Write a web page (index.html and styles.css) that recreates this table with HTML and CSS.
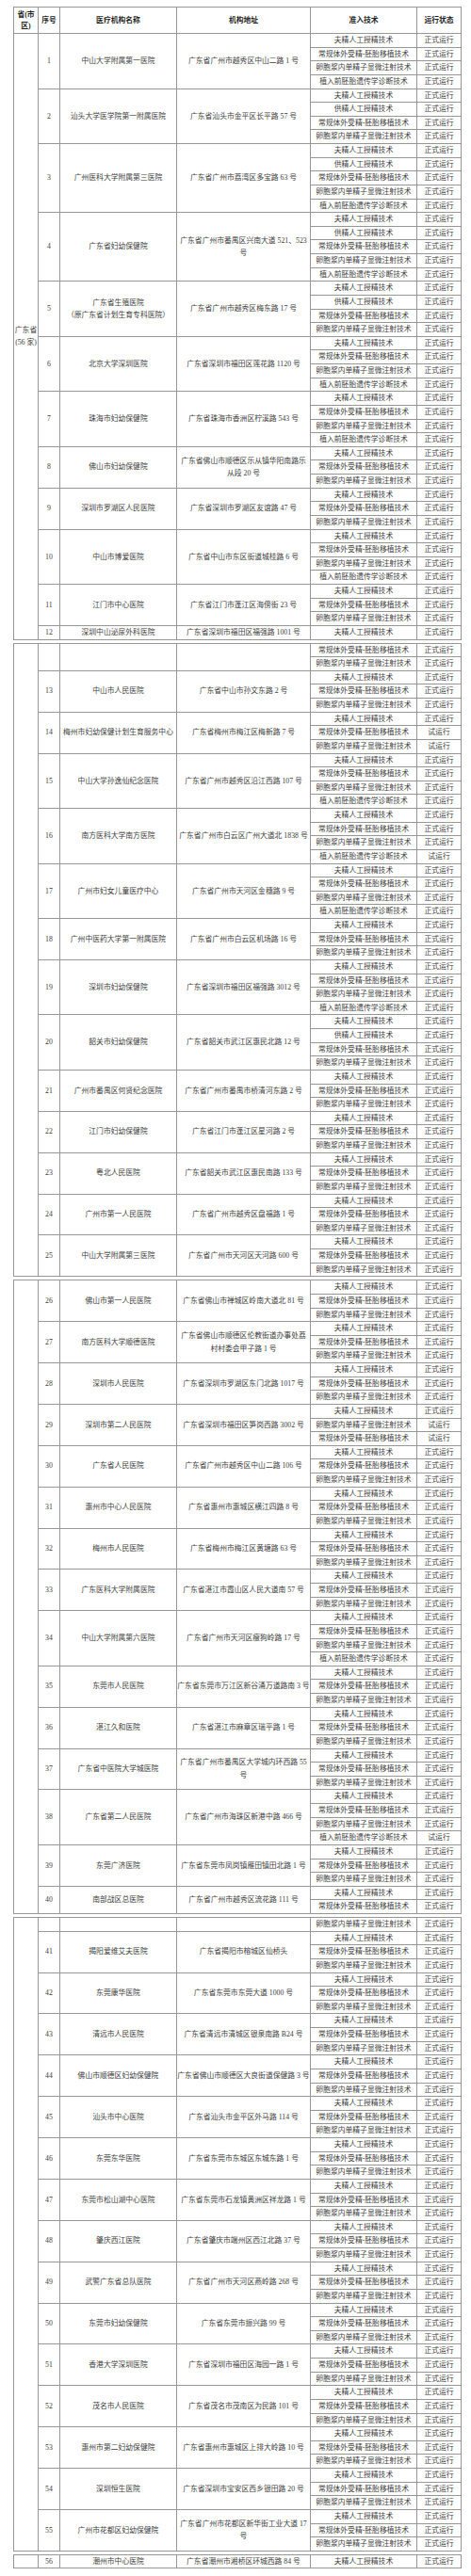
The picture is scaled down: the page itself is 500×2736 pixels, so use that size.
FILE: index.html
```html
<!DOCTYPE html>
<html lang="zh-CN">
<head>
<meta charset="utf-8">
<title>广东省人类辅助生殖技术机构</title>
<link rel="stylesheet" href="styles.css">
</head>
<body>
<main class="page">

<table class="seg">
<colgroup><col class="c1"><col class="c2"><col class="c3"><col class="c4"><col class="c5"><col class="c6"></colgroup>
<thead>
<tr class="head"><th>省(市<br>区)</th><th>序号</th><th>医疗机构名称</th><th>机构地址</th><th>准入技术</th><th>运行状态</th></tr>
</thead>
<tbody>
<tr><td rowspan="44" class="prov">广东省<br>(56 家)</td><td rowspan="4">1</td><td rowspan="4">中山大学附属第一医院</td><td rowspan="4">广东省广州市越秀区中山二路 1 号</td><td>夫精人工授精技术</td><td>正式运行</td></tr>
<tr><td>常规体外受精-胚胎移植技术</td><td>正式运行</td></tr>
<tr><td>卵胞浆内单精子显微注射技术</td><td>正式运行</td></tr>
<tr><td>植入前胚胎遗传学诊断技术</td><td>正式运行</td></tr>

<tr><td rowspan="4">2</td><td rowspan="4">汕头大学医学院第一附属医院</td><td rowspan="4">广东省汕头市金平区长平路 57 号</td><td>夫精人工授精技术</td><td>正式运行</td></tr>
<tr><td>供精人工授精技术</td><td>正式运行</td></tr>
<tr><td>常规体外受精-胚胎移植技术</td><td>正式运行</td></tr>
<tr><td>卵胞浆内单精子显微注射技术</td><td>正式运行</td></tr>

<tr><td rowspan="5">3</td><td rowspan="5">广州医科大学附属第三医院</td><td rowspan="5">广东省广州市荔湾区多宝路 63 号</td><td>夫精人工授精技术</td><td>正式运行</td></tr>
<tr><td>供精人工授精技术</td><td>正式运行</td></tr>
<tr><td>常规体外受精-胚胎移植技术</td><td>正式运行</td></tr>
<tr><td>卵胞浆内单精子显微注射技术</td><td>正式运行</td></tr>
<tr><td>植入前胚胎遗传学诊断技术</td><td>正式运行</td></tr>

<tr><td rowspan="5">4</td><td rowspan="5">广东省妇幼保健院</td><td rowspan="5">广东省广州市番禺区兴南大道 521、523<br>号</td><td>夫精人工授精技术</td><td>正式运行</td></tr>
<tr><td>供精人工授精技术</td><td>正式运行</td></tr>
<tr><td>常规体外受精-胚胎移植技术</td><td>正式运行</td></tr>
<tr><td>卵胞浆内单精子显微注射技术</td><td>正式运行</td></tr>
<tr><td>植入前胚胎遗传学诊断技术</td><td>正式运行</td></tr>

<tr><td rowspan="4">5</td><td rowspan="4">广东省生殖医院<br>（原广东省计划生育专科医院）</td><td rowspan="4">广东省广州市越秀区梅东路 17 号</td><td>夫精人工授精技术</td><td>正式运行</td></tr>
<tr><td>供精人工授精技术</td><td>正式运行</td></tr>
<tr><td>常规体外受精-胚胎移植技术</td><td>正式运行</td></tr>
<tr><td>卵胞浆内单精子显微注射技术</td><td>正式运行</td></tr>

<tr><td rowspan="4">6</td><td rowspan="4">北京大学深圳医院</td><td rowspan="4">广东省深圳市福田区莲花路 1120 号</td><td>夫精人工授精技术</td><td>正式运行</td></tr>
<tr><td>常规体外受精-胚胎移植技术</td><td>正式运行</td></tr>
<tr><td>卵胞浆内单精子显微注射技术</td><td>正式运行</td></tr>
<tr><td>植入前胚胎遗传学诊断技术</td><td>正式运行</td></tr>

<tr><td rowspan="4">7</td><td rowspan="4">珠海市妇幼保健院</td><td rowspan="4">广东省珠海市香洲区柠溪路 543 号</td><td>夫精人工授精技术</td><td>正式运行</td></tr>
<tr><td>常规体外受精-胚胎移植技术</td><td>正式运行</td></tr>
<tr><td>卵胞浆内单精子显微注射技术</td><td>正式运行</td></tr>
<tr><td>植入前胚胎遗传学诊断技术</td><td>正式运行</td></tr>

<tr><td rowspan="3">8</td><td rowspan="3">佛山市妇幼保健院</td><td rowspan="3">广东省佛山市顺德区乐从镇华阳南路乐<br>从段 20 号</td><td>夫精人工授精技术</td><td>正式运行</td></tr>
<tr><td>常规体外受精-胚胎移植技术</td><td>正式运行</td></tr>
<tr><td>卵胞浆内单精子显微注射技术</td><td>正式运行</td></tr>

<tr><td rowspan="3">9</td><td rowspan="3">深圳市罗湖区人民医院</td><td rowspan="3">广东省深圳市罗湖区友谊路 47 号</td><td>夫精人工授精技术</td><td>正式运行</td></tr>
<tr><td>常规体外受精-胚胎移植技术</td><td>正式运行</td></tr>
<tr><td>卵胞浆内单精子显微注射技术</td><td>正式运行</td></tr>

<tr><td rowspan="4">10</td><td rowspan="4">中山市博爱医院</td><td rowspan="4">广东省中山市东区街道城桂路 6 号</td><td>夫精人工授精技术</td><td>正式运行</td></tr>
<tr><td>常规体外受精-胚胎移植技术</td><td>正式运行</td></tr>
<tr><td>卵胞浆内单精子显微注射技术</td><td>正式运行</td></tr>
<tr><td>植入前胚胎遗传学诊断技术</td><td>正式运行</td></tr>

<tr><td rowspan="3">11</td><td rowspan="3">江门市中心医院</td><td rowspan="3">广东省江门市蓬江区海傍街 23 号</td><td>夫精人工授精技术</td><td>正式运行</td></tr>
<tr><td>常规体外受精-胚胎移植技术</td><td>正式运行</td></tr>
<tr><td>卵胞浆内单精子显微注射技术</td><td>正式运行</td></tr>

<tr><td>12</td><td>深圳中山泌尿外科医院</td><td>广东省深圳市福田区福强路 1001 号</td><td>夫精人工授精技术</td><td>正式运行</td></tr>
</tbody>
</table>

<table class="seg">
<colgroup><col class="c1"><col class="c2"><col class="c3"><col class="c4"><col class="c5"><col class="c6"></colgroup>
<tbody>
<tr><td rowspan="46"></td><td rowspan="2"></td><td rowspan="2"></td><td rowspan="2"></td><td>常规体外受精-胚胎移植技术</td><td>正式运行</td></tr>
<tr><td>卵胞浆内单精子显微注射技术</td><td>正式运行</td></tr>

<tr><td rowspan="3">13</td><td rowspan="3">中山市人民医院</td><td rowspan="3">广东省中山市孙文东路 2 号</td><td>夫精人工授精技术</td><td>正式运行</td></tr>
<tr><td>常规体外受精-胚胎移植技术</td><td>正式运行</td></tr>
<tr><td>卵胞浆内单精子显微注射技术</td><td>正式运行</td></tr>

<tr><td rowspan="3">14</td><td rowspan="3">梅州市妇幼保健计划生育服务中心</td><td rowspan="3">广东省梅州市梅江区梅新路 7 号</td><td>夫精人工授精技术</td><td>正式运行</td></tr>
<tr><td>常规体外受精-胚胎移植技术</td><td>试运行</td></tr>
<tr><td>卵胞浆内单精子显微注射技术</td><td>试运行</td></tr>

<tr><td rowspan="4">15</td><td rowspan="4">中山大学孙逸仙纪念医院</td><td rowspan="4">广东省广州市越秀区沿江西路 107 号</td><td>夫精人工授精技术</td><td>正式运行</td></tr>
<tr><td>常规体外受精-胚胎移植技术</td><td>正式运行</td></tr>
<tr><td>卵胞浆内单精子显微注射技术</td><td>正式运行</td></tr>
<tr><td>植入前胚胎遗传学诊断技术</td><td>正式运行</td></tr>

<tr><td rowspan="4">16</td><td rowspan="4">南方医科大学南方医院</td><td rowspan="4">广东省广州市白云区广州大道北 1838 号</td><td>夫精人工授精技术</td><td>正式运行</td></tr>
<tr><td>常规体外受精-胚胎移植技术</td><td>正式运行</td></tr>
<tr><td>卵胞浆内单精子显微注射技术</td><td>正式运行</td></tr>
<tr><td>植入前胚胎遗传学诊断技术</td><td>试运行</td></tr>

<tr><td rowspan="4">17</td><td rowspan="4">广州市妇女儿童医疗中心</td><td rowspan="4">广东省广州市天河区金穗路 9 号</td><td>夫精人工授精技术</td><td>正式运行</td></tr>
<tr><td>常规体外受精-胚胎移植技术</td><td>正式运行</td></tr>
<tr><td>卵胞浆内单精子显微注射技术</td><td>正式运行</td></tr>
<tr><td>植入前胚胎遗传学诊断技术</td><td>正式运行</td></tr>

<tr><td rowspan="3">18</td><td rowspan="3">广州中医药大学第一附属医院</td><td rowspan="3">广东省广州市白云区机场路 16 号</td><td>夫精人工授精技术</td><td>正式运行</td></tr>
<tr><td>常规体外受精-胚胎移植技术</td><td>正式运行</td></tr>
<tr><td>卵胞浆内单精子显微注射技术</td><td>正式运行</td></tr>

<tr><td rowspan="4">19</td><td rowspan="4">深圳市妇幼保健院</td><td rowspan="4">广东省深圳市福田区福强路 3012 号</td><td>夫精人工授精技术</td><td>正式运行</td></tr>
<tr><td>常规体外受精-胚胎移植技术</td><td>正式运行</td></tr>
<tr><td>卵胞浆内单精子显微注射技术</td><td>正式运行</td></tr>
<tr><td>植入前胚胎遗传学诊断技术</td><td>正式运行</td></tr>

<tr><td rowspan="4">20</td><td rowspan="4">韶关市妇幼保健院</td><td rowspan="4">广东省韶关市武江区惠民北路 12 号</td><td>夫精人工授精技术</td><td>正式运行</td></tr>
<tr><td>供精人工授精技术</td><td>正式运行</td></tr>
<tr><td>常规体外受精-胚胎移植技术</td><td>正式运行</td></tr>
<tr><td>卵胞浆内单精子显微注射技术</td><td>正式运行</td></tr>

<tr><td rowspan="3">21</td><td rowspan="3">广州市番禺区何贤纪念医院</td><td rowspan="3">广东省广州市番禺市桥清河东路 2 号</td><td>夫精人工授精技术</td><td>正式运行</td></tr>
<tr><td>常规体外受精-胚胎移植技术</td><td>正式运行</td></tr>
<tr><td>卵胞浆内单精子显微注射技术</td><td>正式运行</td></tr>

<tr><td rowspan="3">22</td><td rowspan="3">江门市妇幼保健院</td><td rowspan="3">广东省江门市蓬江区星河路 2 号</td><td>夫精人工授精技术</td><td>正式运行</td></tr>
<tr><td>常规体外受精-胚胎移植技术</td><td>正式运行</td></tr>
<tr><td>卵胞浆内单精子显微注射技术</td><td>正式运行</td></tr>

<tr><td rowspan="3">23</td><td rowspan="3">粤北人民医院</td><td rowspan="3">广东省韶关市武江区惠民南路 133 号</td><td>夫精人工授精技术</td><td>正式运行</td></tr>
<tr><td>常规体外受精-胚胎移植技术</td><td>正式运行</td></tr>
<tr><td>卵胞浆内单精子显微注射技术</td><td>正式运行</td></tr>

<tr><td rowspan="3">24</td><td rowspan="3">广州市第一人民医院</td><td rowspan="3">广东省广州市越秀区盘福路 1 号</td><td>夫精人工授精技术</td><td>正式运行</td></tr>
<tr><td>常规体外受精-胚胎移植技术</td><td>正式运行</td></tr>
<tr><td>卵胞浆内单精子显微注射技术</td><td>正式运行</td></tr>

<tr><td rowspan="3">25</td><td rowspan="3">中山大学附属第三医院</td><td rowspan="3">广东省广州市天河区天河路 600 号</td><td>夫精人工授精技术</td><td>正式运行</td></tr>
<tr><td>常规体外受精-胚胎移植技术</td><td>正式运行</td></tr>
<tr><td>卵胞浆内单精子显微注射技术</td><td>正式运行</td></tr>
</tbody>
</table>

<table class="seg">
<colgroup><col class="c1"><col class="c2"><col class="c3"><col class="c4"><col class="c5"><col class="c6"></colgroup>
<tbody>
<tr><td rowspan="46"></td><td rowspan="3">26</td><td rowspan="3">佛山市第一人民医院</td><td rowspan="3">广东省佛山市禅城区岭南大道北 81 号</td><td>夫精人工授精技术</td><td>正式运行</td></tr>
<tr><td>常规体外受精-胚胎移植技术</td><td>正式运行</td></tr>
<tr><td>卵胞浆内单精子显微注射技术</td><td>正式运行</td></tr>

<tr><td rowspan="3">27</td><td rowspan="3">南方医科大学顺德医院</td><td rowspan="3">广东省佛山市顺德区伦教街道办事处荔<br>村村委会甲子路 1 号</td><td>夫精人工授精技术</td><td>正式运行</td></tr>
<tr><td>常规体外受精-胚胎移植技术</td><td>正式运行</td></tr>
<tr><td>卵胞浆内单精子显微注射技术</td><td>正式运行</td></tr>

<tr><td rowspan="3">28</td><td rowspan="3">深圳市人民医院</td><td rowspan="3">广东省深圳市罗湖区东门北路 1017 号</td><td>夫精人工授精技术</td><td>正式运行</td></tr>
<tr><td>常规体外受精-胚胎移植技术</td><td>正式运行</td></tr>
<tr><td>卵胞浆内单精子显微注射技术</td><td>正式运行</td></tr>

<tr><td rowspan="3">29</td><td rowspan="3">深圳市第二人民医院</td><td rowspan="3">广东省深圳市福田区笋岗西路 3002 号</td><td>夫精人工授精技术</td><td>正式运行</td></tr>
<tr><td>卵胞浆内单精子显微注射技术</td><td>试运行</td></tr>
<tr><td>常规体外受精-胚胎移植技术</td><td>试运行</td></tr>

<tr><td rowspan="3">30</td><td rowspan="3">广东省人民医院</td><td rowspan="3">广东省广州市越秀区中山二路 106 号</td><td>夫精人工授精技术</td><td>正式运行</td></tr>
<tr><td>常规体外受精-胚胎移植技术</td><td>正式运行</td></tr>
<tr><td>卵胞浆内单精子显微注射技术</td><td>正式运行</td></tr>

<tr><td rowspan="3">31</td><td rowspan="3">惠州市中心人民医院</td><td rowspan="3">广东省惠州市惠城区横江四路 8 号</td><td>夫精人工授精技术</td><td>正式运行</td></tr>
<tr><td>常规体外受精-胚胎移植技术</td><td>正式运行</td></tr>
<tr><td>卵胞浆内单精子显微注射技术</td><td>正式运行</td></tr>

<tr><td rowspan="3">32</td><td rowspan="3">梅州市人民医院</td><td rowspan="3">广东省梅州市梅江区黄塘路 63 号</td><td>夫精人工授精技术</td><td>正式运行</td></tr>
<tr><td>常规体外受精-胚胎移植技术</td><td>正式运行</td></tr>
<tr><td>卵胞浆内单精子显微注射技术</td><td>正式运行</td></tr>

<tr><td rowspan="3">33</td><td rowspan="3">广东医科大学附属医院</td><td rowspan="3">广东省湛江市霞山区人民大道南 57 号</td><td>夫精人工授精技术</td><td>正式运行</td></tr>
<tr><td>常规体外受精-胚胎移植技术</td><td>正式运行</td></tr>
<tr><td>卵胞浆内单精子显微注射技术</td><td>正式运行</td></tr>

<tr><td rowspan="4">34</td><td rowspan="4">中山大学附属第六医院</td><td rowspan="4">广东省广州市天河区瘦狗岭路 17 号</td><td>夫精人工授精技术</td><td>正式运行</td></tr>
<tr><td>常规体外受精-胚胎移植技术</td><td>正式运行</td></tr>
<tr><td>卵胞浆内单精子显微注射技术</td><td>正式运行</td></tr>
<tr><td>植入前胚胎遗传学诊断技术</td><td>正式运行</td></tr>

<tr><td rowspan="3">35</td><td rowspan="3">东莞市人民医院</td><td rowspan="3">广东省东莞市万江区新谷涌万道路南 3 号</td><td>夫精人工授精技术</td><td>正式运行</td></tr>
<tr><td>常规体外受精-胚胎移植技术</td><td>正式运行</td></tr>
<tr><td>卵胞浆内单精子显微注射技术</td><td>正式运行</td></tr>

<tr><td rowspan="3">36</td><td rowspan="3">湛江久和医院</td><td rowspan="3">广东省湛江市麻章区瑞平路 1 号</td><td>夫精人工授精技术</td><td>正式运行</td></tr>
<tr><td>常规体外受精-胚胎移植技术</td><td>正式运行</td></tr>
<tr><td>卵胞浆内单精子显微注射技术</td><td>正式运行</td></tr>

<tr><td rowspan="3">37</td><td rowspan="3">广东省中医院大学城医院</td><td rowspan="3">广东省广州市番禺区大学城内环西路 55<br>号</td><td>夫精人工授精技术</td><td>正式运行</td></tr>
<tr><td>常规体外受精-胚胎移植技术</td><td>正式运行</td></tr>
<tr><td>卵胞浆内单精子显微注射技术</td><td>正式运行</td></tr>

<tr><td rowspan="4">38</td><td rowspan="4">广东省第二人民医院</td><td rowspan="4">广东省广州市海珠区新港中路 466 号</td><td>夫精人工授精技术</td><td>正式运行</td></tr>
<tr><td>常规体外受精-胚胎移植技术</td><td>正式运行</td></tr>
<tr><td>卵胞浆内单精子显微注射技术</td><td>正式运行</td></tr>
<tr><td>植入前胚胎遗传学诊断技术</td><td>试运行</td></tr>

<tr><td rowspan="3">39</td><td rowspan="3">东莞广济医院</td><td rowspan="3">广东省东莞市凤岗镇雁田镇田北路 1 号</td><td>夫精人工授精技术</td><td>正式运行</td></tr>
<tr><td>常规体外受精-胚胎移植技术</td><td>正式运行</td></tr>
<tr><td>卵胞浆内单精子显微注射技术</td><td>正式运行</td></tr>

<tr><td rowspan="2">40</td><td rowspan="2">南部战区总医院</td><td rowspan="2">广东省广州市越秀区流花路 111 号</td><td>夫精人工授精技术</td><td>正式运行</td></tr>
<tr><td>常规体外受精-胚胎移植技术</td><td>正式运行</td></tr>
</tbody>
</table>

<table class="seg">
<colgroup><col class="c1"><col class="c2"><col class="c3"><col class="c4"><col class="c5"><col class="c6"></colgroup>
<tbody>
<tr><td rowspan="46"></td><td></td><td></td><td></td><td>卵胞浆内单精子显微注射技术</td><td>正式运行</td></tr>

<tr><td rowspan="3">41</td><td rowspan="3">揭阳爱维艾夫医院</td><td rowspan="3">广东省揭阳市榕城区仙桥头</td><td>夫精人工授精技术</td><td>正式运行</td></tr>
<tr><td>常规体外受精-胚胎移植技术</td><td>正式运行</td></tr>
<tr><td>卵胞浆内单精子显微注射技术</td><td>正式运行</td></tr>

<tr><td rowspan="3">42</td><td rowspan="3">东莞康华医院</td><td rowspan="3">广东省东莞市东莞大道 1000 号</td><td>夫精人工授精技术</td><td>正式运行</td></tr>
<tr><td>常规体外受精-胚胎移植技术</td><td>正式运行</td></tr>
<tr><td>卵胞浆内单精子显微注射技术</td><td>正式运行</td></tr>

<tr><td rowspan="3">43</td><td rowspan="3">清远市人民医院</td><td rowspan="3">广东省清远市清城区银泉南路 B24 号</td><td>夫精人工授精技术</td><td>正式运行</td></tr>
<tr><td>常规体外受精-胚胎移植技术</td><td>正式运行</td></tr>
<tr><td>卵胞浆内单精子显微注射技术</td><td>正式运行</td></tr>

<tr><td rowspan="3">44</td><td rowspan="3">佛山市顺德区妇幼保健院</td><td rowspan="3">广东省佛山市顺德区大良街道保健路 3 号</td><td>夫精人工授精技术</td><td>正式运行</td></tr>
<tr><td>常规体外受精-胚胎移植技术</td><td>正式运行</td></tr>
<tr><td>卵胞浆内单精子显微注射技术</td><td>正式运行</td></tr>

<tr><td rowspan="3">45</td><td rowspan="3">汕头市中心医院</td><td rowspan="3">广东省汕头市金平区外马路 114 号</td><td>夫精人工授精技术</td><td>正式运行</td></tr>
<tr><td>常规体外受精-胚胎移植技术</td><td>正式运行</td></tr>
<tr><td>卵胞浆内单精子显微注射技术</td><td>正式运行</td></tr>

<tr><td rowspan="3">46</td><td rowspan="3">东莞东华医院</td><td rowspan="3">广东省东莞市东城区东城东路 1 号</td><td>夫精人工授精技术</td><td>正式运行</td></tr>
<tr><td>常规体外受精-胚胎移植技术</td><td>正式运行</td></tr>
<tr><td>卵胞浆内单精子显微注射技术</td><td>正式运行</td></tr>

<tr><td rowspan="3">47</td><td rowspan="3">东莞市松山湖中心医院</td><td rowspan="3">广东省东莞市石龙镇黄洲区祥龙路 1 号</td><td>夫精人工授精技术</td><td>正式运行</td></tr>
<tr><td>常规体外受精-胚胎移植技术</td><td>正式运行</td></tr>
<tr><td>卵胞浆内单精子显微注射技术</td><td>正式运行</td></tr>

<tr><td rowspan="3">48</td><td rowspan="3">肇庆西江医院</td><td rowspan="3">广东省肇庆市端州区西江北路 37 号</td><td>夫精人工授精技术</td><td>正式运行</td></tr>
<tr><td>常规体外受精-胚胎移植技术</td><td>正式运行</td></tr>
<tr><td>卵胞浆内单精子显微注射技术</td><td>正式运行</td></tr>

<tr><td rowspan="3">49</td><td rowspan="3">武警广东省总队医院</td><td rowspan="3">广东省广州市天河区燕岭路 268 号</td><td>夫精人工授精技术</td><td>正式运行</td></tr>
<tr><td>常规体外受精-胚胎移植技术</td><td>正式运行</td></tr>
<tr><td>卵胞浆内单精子显微注射技术</td><td>正式运行</td></tr>

<tr><td rowspan="3">50</td><td rowspan="3">东莞市妇幼保健院</td><td rowspan="3">广东省东莞市振兴路 99 号</td><td>夫精人工授精技术</td><td>正式运行</td></tr>
<tr><td>常规体外受精-胚胎移植技术</td><td>正式运行</td></tr>
<tr><td>卵胞浆内单精子显微注射技术</td><td>正式运行</td></tr>

<tr><td rowspan="3">51</td><td rowspan="3">香港大学深圳医院</td><td rowspan="3">广东省深圳市福田区海园一路 1 号</td><td>夫精人工授精技术</td><td>正式运行</td></tr>
<tr><td>常规体外受精-胚胎移植技术</td><td>正式运行</td></tr>
<tr><td>卵胞浆内单精子显微注射技术</td><td>正式运行</td></tr>

<tr><td rowspan="3">52</td><td rowspan="3">茂名市人民医院</td><td rowspan="3">广东省茂名市茂南区为民路 101 号</td><td>夫精人工授精技术</td><td>正式运行</td></tr>
<tr><td>常规体外受精-胚胎移植技术</td><td>正式运行</td></tr>
<tr><td>卵胞浆内单精子显微注射技术</td><td>正式运行</td></tr>

<tr><td rowspan="3">53</td><td rowspan="3">惠州市第二妇幼保健院</td><td rowspan="3">广东省惠州市惠城区上排大岭路 10 号</td><td>夫精人工授精技术</td><td>正式运行</td></tr>
<tr><td>常规体外受精-胚胎移植技术</td><td>正式运行</td></tr>
<tr><td>卵胞浆内单精子显微注射技术</td><td>正式运行</td></tr>

<tr><td rowspan="3">54</td><td rowspan="3">深圳恒生医院</td><td rowspan="3">广东省深圳市宝安区西乡银田路 20 号</td><td>夫精人工授精技术</td><td>正式运行</td></tr>
<tr><td>常规体外受精-胚胎移植技术</td><td>正式运行</td></tr>
<tr><td>卵胞浆内单精子显微注射技术</td><td>正式运行</td></tr>

<tr><td rowspan="3">55</td><td rowspan="3">广州市花都区妇幼保健院</td><td rowspan="3">广东省广州市花都区新华街工业大道 17<br>号</td><td>夫精人工授精技术</td><td>正式运行</td></tr>
<tr><td>常规体外受精-胚胎移植技术</td><td>正式运行</td></tr>
<tr><td>卵胞浆内单精子显微注射技术</td><td>正式运行</td></tr>
</tbody>
</table>

<table class="seg">
<colgroup><col class="c1"><col class="c2"><col class="c3"><col class="c4"><col class="c5"><col class="c6"></colgroup>
<tbody>
<tr><td></td><td>56</td><td>潮州市中心医院</td><td>广东省潮州市湘桥区环城西路 84 号</td><td>夫精人工授精技术</td><td>正式运行</td></tr>
</tbody>
</table>

</main>
</body>
</html>
```

FILE: styles.css
```css
* {
  box-sizing: border-box;
}

html,
body {
  margin: 0;
  background: #ffffff;
}

body {
  font-family: "Liberation Serif", "Noto Sans CJK SC", serif;
  font-size: 7.8px;
  color: #3d3d3d;
}

.page {
  display: flex;
  flex-direction: column;
  align-items: flex-start;
  gap: 3px;
  padding: 7px 0 0 14px;
}

.seg {
  border-collapse: collapse;
  table-layout: fixed;
  width: 475px;
  border: 1px solid #7c7c7c;
}

.c1 { width: 26px; }
.c2 { width: 23px; }
.c3 { width: 124px; }
.c4 { width: 142px; }
.c5 { width: 113px; }
.c6 { width: 47px; }

.seg td,
.seg th {
  border: 1px solid #979797;
  padding: 0;
  text-align: center;
  vertical-align: middle;
  white-space: nowrap;
  line-height: 13.5px;
}

.seg tbody tr {
  height: 14.63px;
}

.head {
  height: 28px;
}

.seg th {
  font-weight: bold;
  color: #1f1f1f;
  line-height: 12px;
}

.prov {
  line-height: 14px;
}
```
